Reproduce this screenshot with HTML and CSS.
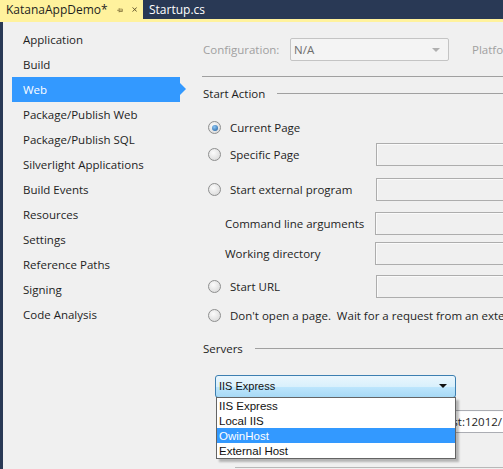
FILE: index.html
```html
<!DOCTYPE html>
<html>
<head>
<link rel="stylesheet" href="styles.css">
</head>
<body>
	<div class="tabs">
		<div class="tab active">
			<span>KatanaAppDemo*</span>
			<svg class="pin" width="10" height="10" viewBox="0 0 10 10"><path d="M0 5.5H3.5M3.5 2V9M3.5 3.5H9V7.5H3.5M3.5 6.5H9" stroke="#6d5d2c" fill="none"/></svg>
			<svg class="close" width="9" height="9" viewBox="0 0 9 9"><path d="M1 1L8 8M8 1L1 8" stroke="#5c4f28" stroke-width="1.6" fill="none"/></svg>
		</div>
		<div class="tab">Startup.cs</div>
	</div>
	<div class="accent"></div>

	<div class="frame">
		<ul class="nav">
			<li>Application</li>
			<li>Build</li>
			<li class="sel">Web</li>
			<li>Package/Publish Web</li>
			<li>Package/Publish SQL</li>
			<li>Silverlight Applications</li>
			<li>Build Events</li>
			<li>Resources</li>
			<li>Settings</li>
			<li>Reference Paths</li>
			<li>Signing</li>
			<li>Code Analysis</li>
		</ul>

		<div class="page">
			<div class="config">
				<span class="config-label">Configuration:</span>
				<div class="combo">N/A<span class="arrow"></span></div>
				<span class="config-label platform">Platform:</span>
			</div>
			<div class="rule"></div>

			<div class="group">Start Action</div>

			<div class="row first"><span class="radio on"></span><span>Current Page</span></div>
			<div class="row gap4"><span class="radio"></span><span class="label">Specific Page</span><div class="field"></div></div>
			<div class="row gap12"><span class="radio"></span><span class="label">Start external program</span><div class="field"></div></div>
			<div class="row gap11"><span class="label sub">Command line arguments</span><div class="field"></div></div>
			<div class="row gap7"><span class="label sub">Working directory</span><div class="field"></div></div>
			<div class="row gap10"><span class="radio"></span><span class="label">Start URL</span><div class="field"></div></div>
			<div class="row gap6"><span class="radio"></span><span class="wide">Don't open a page.&nbsp; Wait for a request from an external application.</span></div>

			<div class="group servers">Servers</div>

			<div class="server-box">
				<div class="server-select">IIS Express<span class="arrow dark"></span></div>
				<div class="row url-row"><span class="label sub">Project Url</span><div class="field white">http://localhost:12012/</div></div>
				<div class="bottom-edge"></div>

				<ul class="popup">
					<li>IIS Express</li>
					<li>Local IIS</li>
					<li class="hot">OwinHost</li>
					<li>External Host</li>
				</ul>
			</div>
		</div>
	</div>
</body>
</html>
```

FILE: styles.css
```css
body{
	margin: 0;
	width: 503px;
	height: 469px;
	overflow: hidden;
	background-color: #f0f0f0;
	font-family: "Open Sans", "Noto Sans", sans-serif;
	font-size: 11.5px;
	color: #1e1e1e;
}

.tabs{
	display: flex;
	height: 19px;
	background-color: #293955;
}

.tab{
	display: flex;
	align-items: center;
	padding: 0 6px;
	color: #ffffff;
	font-size: 12px;
}

.tab.active{
	width: 131px;
	background-color: #fff29d;
	color: #1e1e1e;
}

.tab .pin{
	margin-left: 9px;
}

.tab .close{
	margin-left: 9px;
}

.accent{
	height: 3px;
	background-color: #fff29d;
}

.frame{
	display: flex;
	height: 447px;
	border-left: 3px solid #293955;
}

.nav{
	list-style: none;
	margin: 0;
	padding: 5px 0 0 9px;
	width: 190px;
	flex-shrink: 0;
}

.nav li{
	position: relative;
	width: 157px;
	height: 25px;
	line-height: 25px;
	padding-left: 11px;
}

.nav li.sel{
	background-color: #3399ff;
	color: white;
}

.nav li.sel::after{
	content: "";
	position: absolute;
	right: -6px;
	top: 6px;
	border-left: 6px solid #3399ff;
	border-top: 6px solid transparent;
	border-bottom: 6px solid transparent;
}

.page{
	flex: 1;
	padding-left: 1px;
	white-space: nowrap;
}

.config{
	display: flex;
	align-items: center;
	margin-top: 16px;
	height: 23px;
}

.config-label{
	width: 87px;
	flex-shrink: 0;
	color: #a0a0a0;
}

.config-label.platform{
	margin-left: 23px;
}

.combo{
	position: relative;
	box-sizing: border-box;
	width: 159px;
	height: 23px;
	flex-shrink: 0;
	line-height: 21px;
	padding-left: 3px;
	border: 1px solid #c4c4c4;
	border-radius: 2px;
	background-color: #f4f4f4;
	color: #6d6d6d;
}

.arrow{
	position: absolute;
	right: 8px;
	top: 9px;
	border-top: 4px solid #b0b0b0;
	border-left: 4px solid transparent;
	border-right: 4px solid transparent;
}

.arrow.dark{
	border-top-color: #111;
	top: 8px;
}

.rule{
	height: 1px;
	margin-top: 15px;
	margin-left: -1px;
	background-color: #a0a0a0;
}

.group{
	display: flex;
	align-items: center;
	height: 16px;
	margin-top: 8px;
}

.group::after{
	content: "";
	flex: 1;
	height: 1px;
	margin-left: 12px;
	background-color: #a0a0a0;
}

.group.servers{
	margin-top: 13px;
}

.row{
	display: flex;
	align-items: center;
	height: 23px;
}

.row.first{ margin-top: 15px; }
.row.gap4{ margin-top: 4px; }
.row.gap6{ margin-top: 6px; }
.row.gap7{ margin-top: 7px; }
.row.gap10{ margin-top: 10px; }
.row.gap11{ margin-top: 11px; }
.row.gap12{ margin-top: 12px; }

.radio{
	position: relative;
	box-sizing: border-box;
	width: 13px;
	height: 13px;
	margin: 0 9px 0 5px;
	flex-shrink: 0;
	border: 1px solid #8e8f8f;
	border-radius: 50%;
	background: radial-gradient(circle at 40% 35%, #fbfbfb, #d4d4d4);
}

.radio.on::after{
	content: "";
	position: absolute;
	left: 2.5px;
	top: 2.5px;
	width: 6px;
	height: 6px;
	border-radius: 50%;
	background: radial-gradient(circle at 40% 35%, #8cc6f5, #1b5a9a);
}

.label{
	width: 146px;
	flex-shrink: 0;
}

.label.sub{
	width: 150px;
	padding-left: 22px;
}

.field{
	box-sizing: border-box;
	width: 200px;
	height: 23px;
	flex-shrink: 0;
	line-height: 21px;
	padding-left: 4px;
	border: 1px solid #adadad;
	box-shadow: inset 1px 1px 0 #fafafa;
	background-color: #f0f0f0;
}

.field.white{
	background-color: white;
	border-color: #abadb3;
}

.server-box{
	position: relative;
	margin-top: 19px;
}

.server-select{
	position: relative;
	box-sizing: border-box;
	width: 241px;
	height: 23px;
	line-height: 21px;
	margin-left: 12px;
	padding-left: 3px;
	border: 1px solid #3c7fb1;
	border-radius: 3px;
	background: linear-gradient(#eaf6fd, #d9f0fc 50%, #bee6fd 50%, #a7d9f5);
	font-family: "Liberation Sans", sans-serif;
	font-size: 11px;
	color: #111;
}

.url-row{
	margin-top: 12px;
}

.bottom-edge{
	height: 1px;
	margin: 34px 0 0 32px;
	background-color: #b8b8b8;
}

.popup{
	position: absolute;
	left: 13px;
	top: 22px;
	width: 238px;
	margin: 0;
	padding: 0;
	list-style: none;
	border: 1px solid #646464;
	background-color: white;
	box-shadow: 3px 3px 2px rgba(0, 0, 0, 0.25);
	font-family: "Liberation Sans", sans-serif;
	font-size: 11.5px;
	color: #111;
}

.popup li{
	height: 15px;
	line-height: 15px;
	padding-left: 2px;
	padding-top: 1px;
	box-sizing: border-box;
}

.popup li.hot{
	background-color: #3399ff;
	color: white;
}
```
